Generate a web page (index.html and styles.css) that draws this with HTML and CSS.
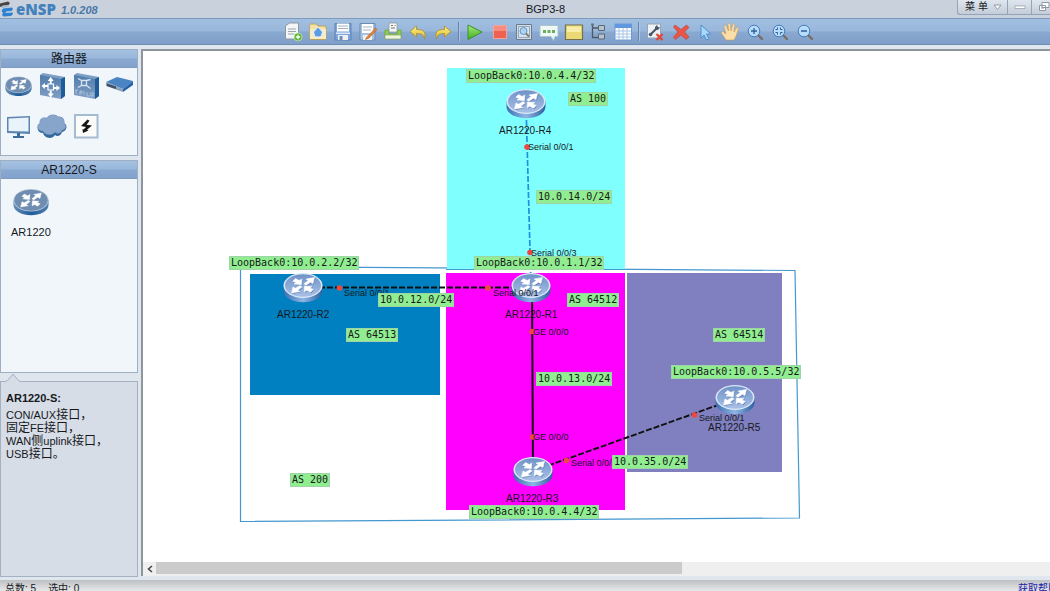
FILE: index.html
```html
<!DOCTYPE html>
<html lang="zh-CN">
<head>
<meta charset="utf-8">
<title>BGP3-8 - eNSP</title>
<link rel="stylesheet" href="styles.css">
</head>
<body>
<svg class="defs" aria-hidden="true">
  <defs>
    <linearGradient id="rim" x1="0" x2="1" y1="0" y2="0"><stop offset="0" stop-color="#3d6fb0"/><stop offset=".5" stop-color="#8db6e4"/><stop offset="1" stop-color="#2f5f9f"/></linearGradient>
    <linearGradient id="top" x1="0" x2="0" y1="0" y2="1"><stop offset="0" stop-color="#6f93c8"/><stop offset="1" stop-color="#a9c0e6"/></linearGradient>
    <linearGradient id="rimDark" x1="0" x2="1" y1="0" y2="0"><stop offset="0" stop-color="#6790b8"/><stop offset=".5" stop-color="#1f5b98"/><stop offset="1" stop-color="#4f80b0"/></linearGradient>
    <linearGradient id="face" x1="0" x2="0" y1="0" y2="1"><stop offset="0" stop-color="#4f7cab"/><stop offset="1" stop-color="#829fc4"/></linearGradient>
    <linearGradient id="green" x1="0" x2="0" y1="0" y2="1"><stop offset="0" stop-color="#a6ea7c"/><stop offset="1" stop-color="#3fae1e"/></linearGradient>
    <linearGradient id="gold" x1="0" x2="0" y1="0" y2="1"><stop offset="0" stop-color="#fdf08a"/><stop offset="1" stop-color="#d9b92c"/></linearGradient>
    <symbol id="arrows" viewBox="0 0 40 32">
      <path d="M31.500 5.500L30 11.500 27.500 10.200 23 13.200 21 11.800 25.200 8.500 23 7zM8.500 21L10 15 12.500 16.300 17 13.500 19 15 14.800 18.300 17 19.600zM18.500 12.800L11 12 13 10.600 9.800 9.200 12.500 6.500 16.200 8.500 18.800 7zM21.500 14L29 14.600 27 16 30.200 17.500 27.500 20.200 23.800 18.300 21.200 19.800z"/>
    </symbol>
    <symbol id="router" viewBox="0 0 40 32">
      <path d="M.5 13v5.500c0 15.500 39 15.500 39 0v-5.500z" fill="url(#rim)"/>
      <ellipse cx="20" cy="13.500" rx="19.500" ry="12.500" fill="#dbe8f8"/>
      <ellipse cx="20" cy="13.500" rx="18" ry="11.300" fill="url(#top)"/>
      <use href="#arrows" width="40" height="32" fill="#496fa6" opacity=".6" transform="translate(.8 1)"/>
      <use href="#arrows" width="40" height="32" fill="#fff" stroke="#fff" stroke-width=".5"/>
    </symbol>
    <symbol id="routerDark" viewBox="0 0 40 32">
      <path d="M.5 13v5.500c0 15.500 39 15.500 39 0v-5.500z" fill="url(#rimDark)"/>
      <ellipse cx="20" cy="13.500" rx="19.500" ry="12.500" fill="#b9c9da"/>
      <ellipse cx="20" cy="13.500" rx="18.500" ry="11.600" fill="#6f8db0"/>
      <use href="#arrows" width="40" height="32" fill="#fff" stroke="#fff" stroke-width=".4"/>
    </symbol>
    <symbol id="lens" viewBox="0 0 20 20">
      <path d="M13 13l4 4" stroke="#7b6d62" stroke-width="2.400" stroke-linecap="round"/>
      <circle cx="9" cy="9" r="5.800" fill="#b7dcfb" stroke="#4a7db8"/>
    </symbol>
  </defs>
</svg>

<header class="titlebar">
  <div class="brand">
    <svg class="brand-mark" viewBox="0 0 14 18"><path d="M0 3.500L8 1.500 10 3 8.500 5 3 5.500 1 7 0 6.500z" fill="#4a4440"/><path d="M3 8.500L12 7.500 13 9 11.500 11 6 11.500 5.500 13 12.500 12.500 13 14 11 16 3.500 16.500 2 15 3 13 1.500 11z" fill="#2f80d0"/><path d="M2 7.500L9 6" stroke="#8fb0d0" stroke-width="1"/></svg>
    <span class="brand-name">eNSP</span>
    <span class="brand-version">1.0.208</span>
  </div>
  <h1 class="doc-title">BGP3-8</h1>
  <div class="window-controls">
    <button class="wc wc-menu" type="button">菜 单<svg class="caret" viewBox="0 0 9 7"><path d="M1 1h7L4.500 5.500z" fill="#fff" stroke="#8e99a6"/></svg></button>
    <button class="wc" type="button" aria-label="最小化"><svg class="wc-icon" viewBox="0 0 12 10"><path d="M1 4h10v2.500H1z" fill="#fff" stroke="#9099a5" stroke-width=".7"/></svg></button>
    <button class="wc" type="button" aria-label="还原"><svg class="wc-icon" viewBox="0 0 12 10"><path d="M4 .5h7v5H4zM1.500 3.500h6v5h-6z" fill="#fff" stroke="#8d96a3"/><path d="M3 5.500h3v1H3z" fill="#8d96a3"/></svg></button>
  </div>
</header>

<nav class="toolbar" aria-label="工具栏">
  <div class="tools tools-file">
    <button class="tool" type="button" aria-label="新建"><svg viewBox="0 0 20 20"><path d="M2.500 4l4-3h9v16h-13z" fill="#f4f5f6" stroke="#8b97a3"/><path d="M5 7h8M5 9.500h8M5 12h6" stroke="#9aa5b0"/><circle cx="15" cy="15" r="4" fill="#58b530" stroke="#dff3d0" stroke-width=".6"/><path d="M15 12.800v4.400M12.800 15h4.400" stroke="#fff" stroke-width="1.300"/></svg></button>
    <button class="tool" type="button" aria-label="打开"><svg viewBox="0 0 20 20"><path d="M1.500 3.500l1-1.500h6l1.500 2h8v13.500h-16z" fill="#f4e3a6" stroke="#b9a266"/><path d="M2 7h16v10H2z" fill="#f7ecc4"/><path d="M10 5l4.500 5-1 3.500c-1 2-6 2-7 0l-1-3.500z" fill="#5b9ce4" stroke="#e3efff"/></svg></button>
    <button class="tool" type="button" aria-label="保存"><svg viewBox="0 0 20 20"><path d="M2 1.500h16v16.500H2z" fill="#7ea6da" stroke="#5d82b5"/><path d="M4 1.500h12v8H4z" fill="#fff"/><path d="M5 4h10M5 6.500h10" stroke="#a5afba"/><path d="M3 10.500h14v1.500H3z" fill="#d9e6f6"/><path d="M5 13h10v5H5z" fill="#eef1f4"/><path d="M6.500 14h3v4h-3z" fill="#6f8db4"/></svg></button>
    <button class="tool" type="button" aria-label="另存为"><svg viewBox="0 0 20 20"><path d="M2 1.500h15v16.500H2z" fill="#a8c1e0" stroke="#6b8bb5"/><path d="M4 2h11v9H4z" fill="#fff"/><path d="M5 5h9M5 8h8" stroke="#a5afba"/><path d="M5 13h9v5H5z" fill="#eef1f4"/><path d="M17.500 6L9 15l-1.500 2.500L11 16l8-8.500z" fill="#e58634" stroke="#a85a22" stroke-width=".6"/></svg></button>
    <button class="tool" type="button" aria-label="打印"><svg viewBox="0 0 20 20"><path d="M6 1h8v9H6z" fill="#f7f7f4" stroke="#8e9a9e" stroke-width=".8"/><path d="M8 3.500h2M8 6h4M11.500 3.500h1" stroke="#777"/><path d="M2 8h3l1 4h8l1-4h3v7H2z" fill="#8fcf47" stroke="#6aa332" stroke-width=".7"/><path d="M2 13h16v4H2z" fill="#edf6dc" stroke="#87a166" stroke-width=".7"/></svg></button>
    <button class="tool" type="button" aria-label="撤销"><svg viewBox="0 0 20 20"><path d="M8.500 4v3.500c7 0 10 2 8 9.500-.5-4-3-5.500-8-5.500V15L2 9.500z" fill="url(#gold)" stroke="#a98b2a" stroke-width=".8"/></svg></button>
    <button class="tool" type="button" aria-label="重做"><svg viewBox="0 0 20 20"><path d="M11.500 4v3.500c-7 0-10 2-8 9.500.5-4 3-5.500 8-5.500V15L18 9.500z" fill="url(#gold)" stroke="#a98b2a" stroke-width=".8"/></svg></button>
  </div>
  <span class="sep"></span>
  <div class="tools tools-run">
    <button class="tool" type="button" aria-label="启动"><svg viewBox="0 0 20 20"><path d="M3 3l14 7L3 17.500z" fill="url(#green)" stroke="#3c8f29"/></svg></button>
    <button class="tool" type="button" aria-label="停止"><svg viewBox="0 0 20 20"><path d="M3.500 3.500h13v13h-13z" fill="#ef6152" stroke="#f3a59c"/><path d="M4 4h12v5H4z" fill="#f68d80"/></svg></button>
    <button class="tool" type="button" aria-label="抓包"><svg viewBox="0 0 20 20"><path d="M2.500 2.500h15v15h-15z" fill="#cfdcea" stroke="#6c7b8c"/><path d="M4.500 4.500h11v11h-11z" fill="#d5e4f2" stroke="#7f8d9c" stroke-width=".7"/><circle cx="9.500" cy="9" r="3.500" fill="#a9d4f4" stroke="#6793bf"/><path d="M12 11.500l3 3" stroke="#8d7a6a" stroke-width="2"/></svg></button>
    <button class="tool" type="button" aria-label="接口"><svg viewBox="0 0 20 20"><path d="M1 3.500h18v11h-3l-1.500 4-2.500-4H1z" fill="#f0f8f6" stroke="#a8c4ce"/><path d="M4 8h3v3H4zM8.500 8h3v3h-3zM13 8h3v3h-3z" fill="#69ae5d"/></svg></button>
    <button class="tool" type="button" aria-label="文本"><svg viewBox="0 0 20 20"><path d="M1.500 3h17v14.500h-17z" fill="#ead974" stroke="#77704a" stroke-width="1.200"/><path d="M3 4.500h14V10H3z" fill="#f5eda8"/></svg></button>
    <button class="tool" type="button" aria-label="拓扑"><svg viewBox="0 0 20 20"><path d="M4.500 2v13.500H11M4.500 6H11" fill="none" stroke="#4e5863" stroke-width="1.300"/><path d="M10.500 3.500h6v5h-6zM10.500 12h6v5h-6z" fill="#b7c2cf" stroke="#5d6874"/><path d="M3 1.500h3v2H3z" fill="#69747f"/></svg></button>
    <button class="tool" type="button" aria-label="表格"><svg viewBox="0 0 20 20"><path d="M2 2h16.500v16H2z" fill="#fff" stroke="#6a9ad8"/><path d="M2 2h16.500v4H2z" fill="#5f98df"/><path d="M2 9h16M2 12h16M2 15h16M6 6v12M10 6v12M14 6v12" stroke="#a7c4e6"/></svg></button>
  </div>
  <span class="sep"></span>
  <div class="tools tools-edit">
    <button class="tool" type="button" aria-label="设置"><svg viewBox="0 0 20 20"><path d="M2.500 2h13v14h-13z" fill="#eef2f6" stroke="#98a5b3"/><path d="M5 13l7-7" stroke="#48596b" stroke-width="2.200"/><circle cx="5.500" cy="12.500" r="1.800" fill="#48596b"/><path d="M10 5l2-2 1 2 2 .5-2 2.500-3-.5z" fill="#48596b"/><path d="M11.500 12l6 6M17.500 12l-6 6" stroke="#e04838" stroke-width="2.400"/></svg></button>
    <button class="tool" type="button" aria-label="删除"><svg viewBox="0 0 20 20"><path d="M5 3l6 4.500L16.500 3 19 5.500 14.500 10l4.500 5-3 2.500-5-4.500-5.500 4.500L3.500 15 8 10 3.500 5z" fill="#ea5546" stroke="#b94940" stroke-width=".7"/></svg></button>
    <button class="tool" type="button" aria-label="选择"><svg viewBox="0 0 20 20"><path d="M6 3l10 9h-4.500l2.500 5-2.500 1-2.500-5-3 3z" fill="#a9d8fb" stroke="#4c8dcf"/></svg></button>
    <button class="tool" type="button" aria-label="拖动"><svg viewBox="0 0 20 20"><path d="M6 18L1.500 11c-.5-2 1.500-2 2.500-.5L6 12 4 4.500c0-1.800 2-1.800 2.500 0L8.500 9 8 2.500c0-1.800 2.200-1.800 2.500 0L11 9l1.500-6c.5-1.800 2.500-1.300 2.200.5L14 10l2.500-4c1-1.500 2.500-.5 2 1L16 14l-2 4z" fill="#fbdda8" stroke="#c59c62" stroke-width=".6"/></svg></button>
    <button class="tool" type="button" aria-label="放大"><svg viewBox="0 0 20 20"><use href="#lens"/><path d="M9 6v6M6 9h6" stroke="#2f5f98" stroke-width="1.300"/></svg></button>
    <button class="tool" type="button" aria-label="适应窗口"><svg viewBox="0 0 20 20"><use href="#lens"/><path d="M7.500 5.500v2h-2M10.500 5.500v2h2M7.500 12.500v-2h-2M10.500 12.500v-2h2" fill="none" stroke="#2f5f98"/></svg></button>
    <button class="tool" type="button" aria-label="缩小"><svg viewBox="0 0 20 20"><use href="#lens"/><path d="M6 9h6" stroke="#2f5f98" stroke-width="1.500"/></svg></button>
  </div>
</nav>

<div class="workspace">
  <aside class="sidebar">
    <section class="panel">
      <h2 class="panel-title">路由器</h2>
      <div class="categories">
        <button class="category" type="button" aria-label="路由器"><svg class="cat-icon" viewBox="-2 -2 32 30"><use href="#routerDark" x="1" y="2" width="27" height="23"/></svg></button>
        <button class="category" type="button" aria-label="交换机"><svg class="cat-icon" viewBox="0 0 32 30"><path d="M4 4l3-2 22 4v19l-4 3z" fill="#7d9fc4"/><path d="M25 8l4-2v19l-4 3z" fill="#1d5a9a"/><path d="M4 4l21 4v20L4 24z" fill="url(#face)"/><path d="M12 13h5.500v6H12z" fill="none" stroke="#fff" stroke-width="1.200"/><path d="M14.700 6l3 4h-2v3h-2v-3h-2zM14.700 26.500l3-4h-2v-3h-2v3h-2zM5.500 15l3.500-3v2h3v2H9v2zM24 17l-3.500-3v2h-3v2h3v2z" fill="#fff"/></svg></button>
        <button class="category" type="button" aria-label="无线局域网"><svg class="cat-icon" viewBox="0 0 32 30"><path d="M4 4l3-2 22 4v19l-4 3z" fill="#7d9fc4"/><path d="M25 8l4-2v19l-4 3z" fill="#1d5a9a"/><path d="M4 4l21 4v20L4 24z" fill="url(#face)"/><path d="M11.500 9.500h5v5h-5zM8 7.500l3.500 2M20.500 8.500l-4 1M8 16.500l3.500-2M20.500 17.500l-4-3" fill="none" stroke="#d6e4f3" stroke-width="1.300"/><path d="M6 19v4M5 19h3M10 20v4M10 20h2v2h-2M14 20v4M17 21v4h3M21 21v4h2v-4" fill="none" stroke="#b8cce2" stroke-width=".8"/></svg></button>
        <button class="category" type="button" aria-label="防火墙"><svg class="cat-icon" viewBox="0 0 32 30"><path d="M2 11l11-5 16 4-10 8z" fill="#4a84c2"/><path d="M2 11v4l17 6v-3z" fill="#8da2b8"/><path d="M19 18l10-8v4l-10 7z" fill="#2464a6"/><path d="M3 12.500l9 3v2.500l-9-3z" fill="#3e4f64"/></svg></button>
        <button class="category" type="button" aria-label="终端"><svg class="cat-icon" viewBox="0 0 32 30"><path d="M5 6l23-1v18L5 22z" fill="#5d87b0"/><path d="M6.500 7.500l20-1v14l-20-.5z" fill="#e9f3fb"/><path d="M15 22h3v3h4v2H11v-2h4z" fill="#3c6c9b"/></svg></button>
        <button class="category" type="button" aria-label="其他设备"><svg class="cat-icon" viewBox="0 0 32 30"><path d="M7 22c-6 0-7-7-3-9-1-5 4-7 7-5 2-5 9-5 11-2 4-1 7 3 6 6 4 2 3 8-2 9-1 4-5 5-7 3-3 5-11 3-12-2z" fill="#34689e"/><path d="M7 20c-6 0-7-6-3-8-1-5 4-6 7-5 2-4 9-4 11-1 4-1 7 3 6 6 3 2 2 7-2 7-1 4-5 4-7 2-3 4-11 3-12-1z" fill="#87a4cb" stroke="#7294be" stroke-width=".5"/></svg></button>
        <button class="category" type="button" aria-label="设备连线"><svg class="cat-icon" viewBox="0 0 32 30"><path d="M5 4h22.500v22.500H5z" fill="#fbfbfa" stroke="#a5bbd2" stroke-width="2"/><path d="M17.500 8.500L11 15l5 1-2.500 2.500-1-.5.5 4 5.500-2.500-1.500-.7L22 14.500l-5.500-.8 3-4z" fill="#151515"/></svg></button>
      </div>
    </section>
    <section class="panel panel-grow">
      <h2 class="panel-title">AR1220-S</h2>
      <button class="model" type="button"><svg class="model-icon"><use href="#routerDark"/></svg>AR1220</button>
    </section>
    <section class="info">
      <svg class="notch" viewBox="0 0 14 9"><path d="M0 8.500L1.500 7.500 7 1l5.500 6.500L14 8.500V9H0z" fill="#d6dde6"/><path d="M0 8l1.500-.5L7 1l5.500 6.500L14 8" fill="none" stroke="#a3b1c3"/></svg>
      <h3 class="info-title">AR1220-S:</h3>
      <p class="info-text"><span class="latin">CON/AUX</span>接口，<br>固定<span class="latin">FE</span>接口，<br><span class="latin">WAN</span>侧<span class="latin">uplink</span>接口，<br><span class="latin">USB</span>接口。</p>
    </section>
  </aside>

  <main class="stage">
    <div class="canvas">
      <svg class="drawing" viewBox="143 51 680 480" width="680" height="480">
        <path d="M240.500 266.500L795 270.500 799.500 518 240.500 521.500z" fill="none" stroke="#4398cf" stroke-width="1.200"/>
        <rect x="447" y="68" width="178" height="202" fill="#80ffff"/>
        <path d="M446 269.500H625" stroke="#4398cf"/>
        <rect x="446" y="273" width="179" height="237" fill="#ff00ff"/>
        <rect x="250" y="274" width="190" height="121" fill="#0080c0"/>
        <rect x="627" y="273" width="155" height="199" fill="#8080c0"/>
        <path d="M526 104L531 287" stroke="#1f8fe0" stroke-width="1.700" stroke-dasharray="6 2"/>
        <path d="M303 287.500H531" stroke="#111" stroke-width="2" stroke-dasharray="6 2"/>
        <path d="M532 287L533 471" stroke="#111" stroke-width="2"/>
        <path d="M533 471L735 399" stroke="#111" stroke-width="1.900" stroke-dasharray="6 2"/>
      </svg>
      <svg class="device r4"><use href="#router"/></svg>
      <svg class="device r2"><use href="#router"/></svg>
      <svg class="device r1"><use href="#router"/></svg>
      <svg class="device r3"><use href="#router"/></svg>
      <svg class="device r5"><use href="#router"/></svg>
      <svg class="drawing" viewBox="143 51 680 480" width="680" height="480" fill="#f0483c">
        <circle cx="527" cy="147" r="2.800"/><circle cx="530" cy="252.500" r="2.800"/><circle cx="339.500" cy="288" r="2.800"/><circle cx="488" cy="288" r="2.800"/><circle cx="532" cy="331.500" r="2.800"/><circle cx="532.500" cy="437" r="2.800"/><circle cx="566.500" cy="460.500" r="2.800"/><circle cx="694.500" cy="415" r="2.800"/>
      </svg>
      <span class="name name-r4">AR1220-R4</span>
      <span class="name name-r2">AR1220-R2</span>
      <span class="name name-r1">AR1220-R1</span>
      <span class="name name-r3">AR1220-R3</span>
      <span class="name name-r5">AR1220-R5</span>
      <span class="port port-r4">Serial 0/0/1</span>
      <span class="port port-r1-north">Serial 0/0/3</span>
      <span class="port port-r2">Serial 0/0/1</span>
      <span class="port port-r1-west">Serial 0/0/1</span>
      <span class="port port-r1-south">GE 0/0/0</span>
      <span class="port port-r3-north">GE 0/0/0</span>
      <span class="port port-r3-east">Serial 0/0/3</span>
      <span class="port port-r5">Serial 0/0/1</span>
      <span class="tag loop-r4">LoopBack0:10.0.4.4/32</span>
      <span class="tag as-100">AS 100</span>
      <span class="tag net-14">10.0.14.0/24</span>
      <span class="tag loop-r1">LoopBack0:10.0.1.1/32</span>
      <span class="tag loop-r2">LoopBack0:10.0.2.2/32</span>
      <span class="tag net-12">10.0.12.0/24</span>
      <span class="tag as-64512">AS 64512</span>
      <span class="tag as-64513">AS 64513</span>
      <span class="tag as-64514">AS 64514</span>
      <span class="tag loop-r5">LoopBack0:10.0.5.5/32</span>
      <span class="tag net-13">10.0.13.0/24</span>
      <span class="tag net-35">10.0.35.0/24</span>
      <span class="tag as-200">AS 200</span>
      <span class="tag loop-r3">LoopBack0:10.0.4.4/32</span>
    </div>
    <div class="scrollbar">
      <button class="scroll-left" type="button" aria-label="向左滚动"><svg class="scroll-arrow" viewBox="0 0 6 8"><path d="M5 1L1.500 4 5 7" fill="none" stroke="#444" stroke-width="1.500"/></svg></button>
      <div class="thumb"></div>
    </div>
  </main>
</div>

<footer class="statusbar">
  <span class="count">总数: 5</span>
  <span class="count">选中: 0</span>
  <a class="help" href="#help">获取帮助</a>
</footer>
</body>
</html>
```
FILE: styles.css
```css
* { box-sizing: border-box; }

body {
  margin: 0;
  height: 100vh;
  display: flex;
  flex-direction: column;
  overflow: hidden;
  background: #dfe6ee;
  color: #16181c;
  font-family: "Liberation Sans", "Noto Sans CJK SC", sans-serif;
  font-size: 11px;
}

button {
  margin: 0;
  padding: 0;
  border: 0;
  background: none;
  color: inherit;
  font: inherit;
}

h1, h2, h3, p { margin: 0; font-weight: normal; }

svg { display: block; flex: none; }

.defs { position: absolute; width: 0; height: 0; }

/* Title bar */
.titlebar {
  flex: none;
  display: flex;
  height: 18px;
  background: #c8d1dc;
  overflow: hidden;
}

.brand { flex: none; display: flex; align-items: center; width: 134px; }
.brand-mark { width: 14px; height: 18px; }
.brand-name {
  margin-left: 2px;
  color: #4381bd;
  font: 800 15px/18px "Open Sans", sans-serif;
}
.brand-version {
  margin-left: 5px;
  padding-top: 3px;
  color: #4a78a8;
  font: italic bold 11px/15px "Liberation Sans", sans-serif;
}

.doc-title {
  flex: 1;
  font-size: 11px;
  line-height: 18px;
  text-align: center;
}

.window-controls {
  flex: none;
  display: flex;
  width: 93px;
  height: 15px;
  border: 1px solid #93a3b8;
  border-width: 0 0 1px 1px;
  border-bottom-left-radius: 3px;
  background: linear-gradient(#dfe6ee, #c3ccd8);
  overflow: hidden;
}

.wc {
  flex: none;
  display: flex;
  align-items: center;
  justify-content: center;
  width: 24px;
  border-right: 1px solid #93a3b8;
}
.wc-menu { width: 50px; gap: 5px; padding-left: 2px; font-size: 10px; line-height: 14px; }
.wc-icon { width: 12px; height: 10px; }
.caret { width: 9px; height: 7px; }

/* Toolbar */
.toolbar {
  flex: none;
  display: flex;
  align-items: stretch;
  height: 27px;
  padding-left: 280px;
  border-top: 1px solid #7f9bbb;
  border-bottom: 1px solid #6d8cb4;
  background: linear-gradient(#a1bfe0, #98b7db 48%, #89a9d1 52%, #7f9fc9);
}
.tools { display: flex; }
.tools-file { width: 175px; }
.tools-run { width: 172px; }
.tools-edit { width: 174px; }
.tool { flex: 1; display: flex; align-items: center; justify-content: center; }
.tool svg { width: 20px; height: 20px; }
.sep {
  width: 2px;
  margin: 3px;
  border-left: 1px solid #6484ad;
  border-right: 1px solid #adc5e2;
}

/* Workspace */
.workspace { flex: 1; display: flex; min-height: 0; padding-top: 4px; }

.sidebar {
  flex: none;
  display: flex;
  flex-direction: column;
  width: 138px;
  margin-right: 3px;
  padding-bottom: 3px;
}

.panel {
  margin-bottom: 4px;
  border: 1px solid #9dafc4;
  background: #f1f6fb;
}
.panel-grow { flex: 1; margin-bottom: 8px; }

.panel-title {
  height: 18px;
  border-bottom: 1px solid #7f9cc0;
  background: linear-gradient(#a6c1e1, #98b7db 48%, #89a9d1 52%, #82a2cc);
  font-size: 12px;
  line-height: 18px;
  text-align: center;
}

.categories {
  display: grid;
  grid-template-columns: repeat(4, 1fr);
  grid-auto-rows: 36px;
  row-gap: 4px;
  padding-bottom: 11px;
}
.category { display: flex; align-items: center; justify-content: center; }
.cat-icon { width: 32px; height: 30px; }

.model {
  display: flex;
  flex-direction: column;
  align-items: center;
  gap: 8px;
  padding: 9px 10px;
  line-height: 14px;
}
.model-icon { width: 36px; height: 29px; }

.info {
  position: relative;
  flex: none;
  height: 196px;
  padding: 9px 5px;
  border: 1px solid #a3b1c3;
  background: #d6dde6;
}
.notch { position: absolute; left: 5px; top: -9px; width: 14px; height: 9px; }
.info-title { font-size: 11px; font-weight: bold; line-height: 14px; }
.info-text { padding-top: 4px; font-size: 12px; line-height: 13px; white-space: nowrap; }
.latin { font-size: 11px; }

.stage {
  flex: 1;
  display: flex;
  flex-direction: column;
  min-width: 0;
  margin-bottom: 4px;
  border-top: 2px solid #8f959d;
  border-left: 2px solid #8f959d;
  background: #fff;
}

/* Topology canvas */
.canvas { position: relative; flex: 1; min-height: 0; overflow: hidden; }
.drawing { position: absolute; left: 0; top: 0; }

.device { position: absolute; width: 40px; height: 32px; }
.r4 { left: 363px; top: 37px; }
.r2 { left: 140px; top: 221px; }
.r1 { left: 368px; top: 221px; }
.r3 { left: 370px; top: 405px; }
.r5 { left: 572px; top: 333px; }

.name, .port { position: absolute; line-height: 12px; white-space: nowrap; }

.name { font-size: 10px; }
.name-r4 { left: 356px; top: 74px; }
.name-r2 { left: 134px; top: 258px; }
.name-r1 { left: 362px; top: 258px; }
.name-r3 { left: 363px; top: 442px; }
.name-r5 { left: 565px; top: 371px; }

.port { font-size: 9px; }
.port-r4 { left: 385px; top: 90px; }
.port-r1-north { left: 388px; top: 196px; }
.port-r2 { left: 201px; top: 236px; }
.port-r1-west { left: 350px; top: 236px; }
.port-r1-south { left: 390px; top: 275px; }
.port-r3-north { left: 390px; top: 380px; }
.port-r3-east { left: 428px; top: 406px; }
.port-r5 { left: 556px; top: 361px; }

.tag {
  position: absolute;
  padding: 0 1px;
  border: 1px solid #9fd4a8;
  background: #90ee90;
  font: 10px/12px "DejaVu Sans Mono", monospace;
  white-space: nowrap;
}
.loop-r4 { left: 323px; top: 18px; }
.as-100 { left: 425px; top: 41px; }
.net-14 { left: 393px; top: 139px; }
.loop-r1 { left: 331px; top: 205px; }
.loop-r2 { left: 86px; top: 205px; }
.net-12 { left: 235px; top: 242px; }
.as-64512 { left: 424px; top: 242px; }
.as-64513 { left: 203px; top: 277px; }
.as-64514 { left: 570px; top: 277px; }
.loop-r5 { left: 528px; top: 314px; }
.net-13 { left: 393px; top: 321px; }
.net-35 { left: 469px; top: 404px; }
.as-200 { left: 147px; top: 422px; }
.loop-r3 { left: 326px; top: 454px; }

.scrollbar { flex: none; display: flex; height: 14px; background: #efefef; }
.scroll-left { display: flex; align-items: center; justify-content: center; width: 13px; }
.scroll-arrow { width: 6px; height: 8px; }
.thumb { width: 58%; height: 12px; background: #cbcbcb; }

/* Status bar */
.statusbar {
  flex: none;
  display: flex;
  gap: 12px;
  height: 11px;
  padding: 2px 0 0 5px;
  background: linear-gradient(#bdc1c4, #e6e7e8);
  font-size: 10px;
  line-height: 13px;
  white-space: nowrap;
  overflow: hidden;
}
.count { flex: none; }
.help { flex: none; width: 32px; margin-left: auto; color: #1c1ca8; }
```
